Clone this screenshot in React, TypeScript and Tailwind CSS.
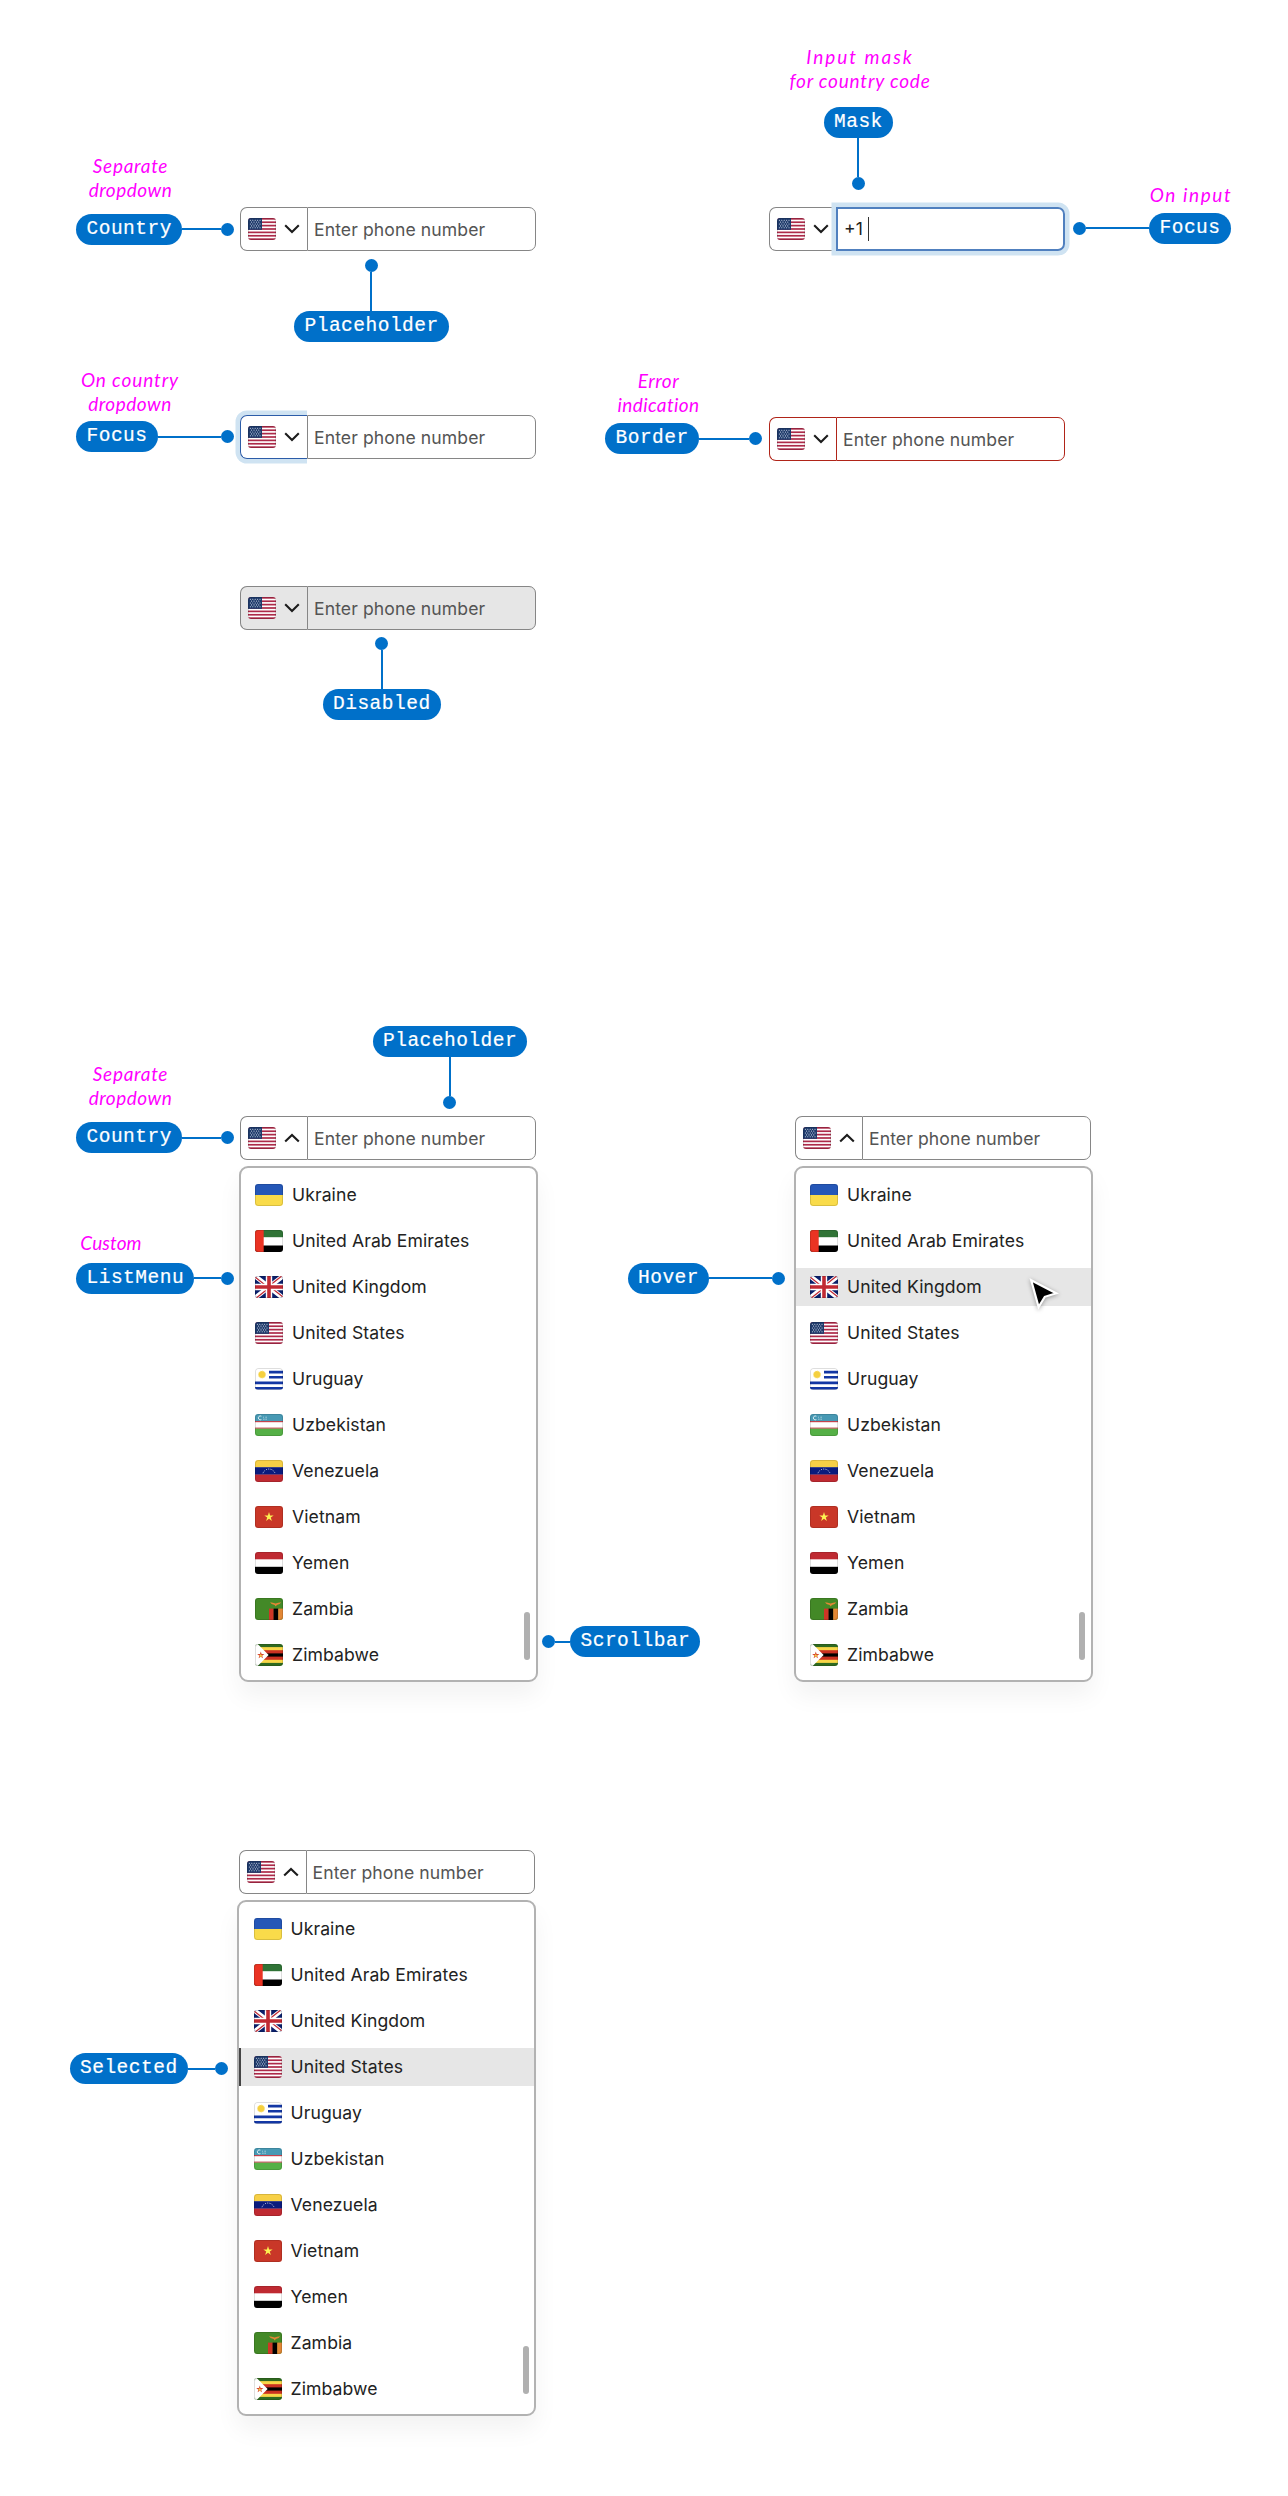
import type { ReactNode } from "react";

type Code = "ua" | "ae" | "gb" | "us" | "uy" | "uz" | "ve" | "vn" | "ye" | "zm" | "zw";

const COUNTRIES: { code: Code; name: string }[] = [
  { code: "ua", name: "Ukraine" },
  { code: "ae", name: "United Arab Emirates" },
  { code: "gb", name: "United Kingdom" },
  { code: "us", name: "United States" },
  { code: "uy", name: "Uruguay" },
  { code: "uz", name: "Uzbekistan" },
  { code: "ve", name: "Venezuela" },
  { code: "vn", name: "Vietnam" },
  { code: "ye", name: "Yemen" },
  { code: "zm", name: "Zambia" },
  { code: "zw", name: "Zimbabwe" },
];

const STAR = "M0 -1 L.225 -.309 L.951 -.309 L.363 .118 L.588 .809 L0 .382 L-.588 .809 L-.363 .118 L-.951 -.309 L-.225 -.309Z";

const ART: Record<Code, ReactNode> = {
  ua: (
    <>
      <rect width="28" height="11" fill="#2557b7" />
      <rect y="11" width="28" height="11" fill="#f9db4a" />
    </>
  ),
  ae: (
    <>
      <rect width="28" height="22" fill="#fff" />
      <rect width="28" height="7.2" fill="#307336" />
      <rect y="15.5" width="28" height="6.5" fill="#000" />
      <rect width="8.7" height="22" fill="#ea3323" />
    </>
  ),
  gb: (
    <>
      <rect width="28" height="22" fill="#0a1f6b" />
      <path d="M0 0 28 22M28 0 0 22" stroke="#fff" strokeWidth="4.6" />
      <path d="M0 1 12 10.4M28 -1 16 8.6M0 23 12 13.4M28 21 16 11.6" stroke="#c22b36" strokeWidth="1.3" />
      <path d="M14 0V22M0 11H28" stroke="#fff" strokeWidth="6.4" />
      <path d="M14 0V22M0 11H28" stroke="#c12a33" strokeWidth="3.6" />
    </>
  ),
  us: (
    <>
      <rect width="28" height="22" fill="#fff" />
      {[0, 1, 2, 3, 4, 5, 6].map((i) => (
        <rect key={i} y={i * 3.385} width="28" height="1.69" fill="#ad2a49" />
      ))}
      <rect width="14" height="11.85" fill="#1e3a6b" />
      {[2.2, 4.1, 6, 7.9, 9.8].map((y, r) =>
        (r % 2 ? [3.6, 6, 8.4, 10.8] : [2.4, 4.8, 7.2, 9.6, 12]).map((x) => (
          <circle key={`${x}-${y}`} cx={x} cy={y} r=".55" fill="#dbe2ee" />
        ))
      )}
    </>
  ),
  uy: (
    <>
      <rect width="28" height="22" fill="#fff" />
      <path d="M14 4.1H28M14 9.3H28M0 14.9H28M0 20.2H28" stroke="#1337a4" strokeWidth="2.6" />
      <circle cx="7" cy="6.6" r="3.5" fill="#f5d03e" stroke="#f9e07c" strokeWidth="1" strokeDasharray="1.1 .9" />
    </>
  ),
  uz: (
    <>
      <rect width="28" height="22" fill="#fff" />
      <rect width="28" height="7.2" fill="#4799b4" />
      <rect y="7" width="28" height="1.2" fill="#c4434d" />
      <rect y="13.6" width="28" height="1.2" fill="#c4434d" />
      <rect y="14.7" width="28" height="7.3" fill="#55b046" />
      <path d="M6.4 2.2A2 2 0 1 0 6.4 5.6" fill="none" stroke="#e6f3f6" strokeWidth=".9" />
      <path d="M8.4 5.2h1M10.6 5.2h1M10.6 3.2h1M8.4 3.2h.6" stroke="#e6f3f6" strokeWidth=".9" />
    </>
  ),
  ve: (
    <>
      <rect width="28" height="7.4" fill="#f7d046" />
      <rect y="7.2" width="28" height="7.6" fill="#0a1b7d" />
      <rect y="14.6" width="28" height="7.4" fill="#bf2a32" />
      <path d="M8 13.2A6.4 6.4 0 0 1 20 13.2" fill="none" stroke="#dfe3f3" strokeWidth="1" strokeDasharray="1 1.3" />
    </>
  ),
  vn: (
    <>
      <rect width="28" height="22" fill="#c93728" />
      <path d={STAR} transform="translate(14 11) scale(4.9)" fill="#fdf151" />
    </>
  ),
  ye: (
    <>
      <rect width="28" height="22" fill="#fff" />
      <rect width="28" height="7.3" fill="#bf2a32" />
      <rect y="14.8" width="28" height="7.2" fill="#000" />
    </>
  ),
  zm: (
    <>
      <rect width="28" height="22" fill="#438927" />
      <rect x="14" y="10.6" width="4.8" height="11.4" fill="#ce3626" />
      <rect x="18.6" y="10.6" width="4.8" height="11.4" fill="#000" />
      <rect x="23.2" y="10.6" width="4.8" height="11.4" fill="#e28735" />
      <path d="M15 4.2Q18 4.8 20.6 5.4Q23 4.8 26.2 4.2Q24.8 6.8 21.8 7.1L20.8 8.4L19.6 7.1Q16.4 6.8 15 4.2Z" fill="#e28735" />
    </>
  ),
  zw: (
    <>
      <rect width="28" height="22" fill="#2f6a20" />
      <rect y="3.1" width="28" height="15.8" fill="#f8d648" />
      <rect y="6.2" width="28" height="9.6" fill="#cb3122" />
      <rect y="9.4" width="28" height="3.2" fill="#000" />
      <path d="M0 0H2.6L13.6 11L2.6 22H0Z" fill="#fff" />
      <path d={STAR} transform="translate(5.8 11.2) scale(3.8)" fill="#d4442c" />
      <path d={STAR} transform="translate(5.8 11.6) scale(2.1)" fill="#f5cf45" />
    </>
  ),
};

function Flag({ code }: { code: Code }) {
  return (
    <svg viewBox="0 0 28 22" className="h-[22px] w-7 shrink-0 overflow-hidden rounded-[3px]">
      {ART[code]}
      <rect x=".5" y=".5" width="27" height="21" rx="2.6" fill="none" stroke="#000" strokeOpacity=".13" />
    </svg>
  );
}

function Chevron({ up = false }: { up?: boolean }) {
  return (
    <svg viewBox="0 0 16 10" className="h-2.5 w-4 shrink-0" fill="none" stroke="#1c1c1c" strokeWidth="2.1">
      <path d={up ? "M1.2 8.6 8 1.9 14.8 8.6" : "M1.2 1.3 8 8 14.8 1.3"} />
    </svg>
  );
}

type State = "default" | "open" | "focusCountry" | "focusInput" | "error" | "disabled";

const EDGE: Record<State, string> = {
  default: "border-[#868686]",
  open: "border-[#868686]",
  focusCountry: "border-[#868686]",
  focusInput: "border-[#868686]",
  error: "border-[#b02418]",
  disabled: "border-[#868686] bg-[#e6e6e6]",
};

function PhoneField({ state = "default" }: { state?: State }) {
  const edge = EDGE[state];
  return (
    <div className={`flex h-11 w-[296px] rounded-[7px] ${edge}`}>
      <div
        className={`flex w-[67px] shrink-0 items-center gap-2 rounded-l-[7px] border-y border-l pl-[7px] ${
          state === "focusCountry"
            ? "border-[#2c5ca8] shadow-[0_0_0_4.5px_#cfe3f2] [clip-path:inset(-6px_0_-6px_-6px)]"
            : edge
        }`}
      >
        <Flag code="us" />
        <Chevron up={state === "open"} />
      </div>
      {state === "focusInput" ? (
        <div className="flex flex-1 items-center rounded-r-[7px] border-2 border-[#5080bf] pl-[6px] text-[17.6px] text-[#222] shadow-[0_0_0_4.5px_#cfe3f2]">
          <span className="mt-px">+1</span>
          <span className="ml-[5px] h-6 w-px bg-[#333]" />
        </div>
      ) : (
        <div className={`flex flex-1 items-center rounded-r-[7px] border pl-[6px] text-[17.6px] tracking-[0.09px] text-[#545454] ${edge}`}>
          <span className="mt-0.5">Enter phone number</span>
        </div>
      )}
    </div>
  );
}

function ListMenu({ hover, selected }: { hover?: Code; selected?: Code }) {
  return (
    <div className="relative -mx-[1.5px] mt-1.5 flex h-[516px] flex-col gap-2 rounded-[9px] border-2 border-[#b2b2b2] bg-white pt-[7.5px] shadow-[0_14px_24px_rgba(0,0,0,0.05)]">
      {COUNTRIES.map(({ code, name }) => (
        <div
          key={code}
          className={`flex h-[38px] shrink-0 items-center gap-[9px] text-[17.6px] tracking-[0.09px] text-[#222] ${
            code === selected ? "border-l-2 border-[#444] bg-[#e6e6e6] pl-[12.5px]" : "pl-[14.5px]"
          } ${code === hover ? "bg-[#e6e6e6]" : ""}`}
        >
          <Flag code={code} />
          <span className="mt-0.5">{name}</span>
        </div>
      ))}
      <div className="absolute top-[444px] right-[5.5px] h-12 w-[6px] rounded-full bg-[#b0b0b0]" />
    </div>
  );
}

const DIRECTION = {
  right: "flex-row",
  left: "flex-row-reverse",
  down: "flex-col",
  up: "flex-col-reverse",
};

/* Pill label with a leader line ending in a dot, anchored to its specimen. */
function Callout({ text, to, lead, className }: { text: string; to: keyof typeof DIRECTION; lead: string; className: string }) {
  return (
    <div className={`absolute flex items-center ${DIRECTION[to]} ${className}`}>
      <span className="flex h-[31px] items-center rounded-full bg-[#0070c9] pt-px pr-[10px] pl-[10.5px] font-['Liberation_Mono',monospace] text-[19.5px] leading-none tracking-[0.5px] whitespace-nowrap text-white [-webkit-text-stroke:0.2px_white]">
        {text}
      </span>
      <span className={`shrink-0 bg-[#0070c9] ${lead}`} />
      <span className="size-[13px] shrink-0 rounded-full bg-[#0070c9]" />
    </div>
  );
}

function Note({ children, className }: { children: ReactNode; className: string }) {
  return (
    <div className={`absolute flex flex-col items-center font-['Lato',sans-serif] text-[19px] leading-6 whitespace-nowrap text-[#ff00ff] italic ${className}`}>
      {children}
    </div>
  );
}

export default function App() {
  return (
    <main className="h-[2496px] w-[1288px] overflow-hidden bg-white pt-[207px] font-['Inter',sans-serif]">
      <section className="flex gap-[233px] pl-60">
        <div className="relative">
          <PhoneField />
          <Note className="top-[-53px] left-[-152px] w-[85px]">
            <span className="tracking-[0.7px]">Separate</span>
            <span className="tracking-[0.5px]">dropdown</span>
          </Note>
          <Callout text="Country" to="right" lead="h-[2px] w-[39px]" className="top-[6.5px] left-[-164px]" />
          <Callout text="Placeholder" to="up" lead="h-[39px] w-[2px]" className="top-[52px] left-[54px]" />
        </div>
        <div className="relative">
          <PhoneField state="focusInput" />
          <Note className="top-[-162px] left-[19px] w-36">
            <span className="tracking-[2px]">Input mask</span>
            <span className="tracking-[0.8px]">for country code</span>
          </Note>
          <Callout text="Mask" to="down" lead="h-[39px] w-[2px]" className="top-[-100px] left-[54.5px]" />
          <Note className="top-[-24px] left-[381px] w-[82px]">
            <span className="tracking-[1.6px]">On input</span>
          </Note>
          <Callout text="Focus" to="left" lead="h-[2px] w-[63px]" className="top-[5.5px] left-[304px]" />
        </div>
      </section>

      <section className="mt-[164px] flex items-start gap-[233px] pl-60">
        <div className="relative">
          <PhoneField state="focusCountry" />
          <Note className="top-[-47px] left-[-160px] w-[100px]">
            <span className="tracking-[0.9px]">On country</span>
            <span className="tracking-[0.5px]">dropdown</span>
          </Note>
          <Callout text="Focus" to="right" lead="h-[2px] w-[63px]" className="top-[6px] left-[-164px]" />
        </div>
        <div className="relative mt-[2px]">
          <PhoneField state="error" />
          <Note className="top-[-48px] left-[-152px] w-[83px]">
            <span className="tracking-[0.5px]">Error</span>
            <span className="tracking-[0.4px]">indication</span>
          </Note>
          <Callout text="Border" to="right" lead="h-[2px] w-[50px]" className="top-[6px] left-[-164px]" />
        </div>
      </section>

      <section className="mt-[125px] flex pl-60">
        <div className="relative">
          <PhoneField state="disabled" />
          <Callout text="Disabled" to="up" lead="h-[39px] w-[2px]" className="top-[50.5px] left-[82.5px]" />
        </div>
      </section>

      <section className="mt-[486px] flex gap-[259px] pl-60">
        <div className="relative">
          <PhoneField state="open" />
          <ListMenu />
          <Note className="top-[-54px] left-[-152px] w-[85px]">
            <span className="tracking-[0.7px]">Separate</span>
            <span className="tracking-[0.5px]">dropdown</span>
          </Note>
          <Callout text="Country" to="right" lead="h-[2px] w-[39px]" className="top-[6px] left-[-164px]" />
          <Callout text="Placeholder" to="down" lead="h-[39px] w-[2px]" className="top-[-90.5px] left-[132.5px]" />
          <Note className="top-[115px] left-[-160px] w-[62px]">
            <span className="tracking-[0.1px]">Custom</span>
          </Note>
          <Callout text="ListMenu" to="right" lead="h-[2px] w-[27px]" className="top-[146.5px] left-[-164px]" />
          <Callout text="Scrollbar" to="left" lead="h-[2px] w-[15px]" className="top-[510px] left-[302px]" />
        </div>
        <div className="relative">
          <PhoneField state="open" />
          <ListMenu hover="gb" />
          <Callout text="Hover" to="right" lead="h-[2px] w-[63px]" className="top-[146.5px] left-[-167.5px]" />
          <svg viewBox="0 0 34 40" className="absolute top-[159px] left-[232px] h-10 w-[34px] drop-shadow-[0_1px_2px_rgba(0,0,0,0.35)]">
            <path d="M4.2 5.2 29.2 18.2 17.8 21.8 11.6 32Z" fill="#000" stroke="#fff" strokeWidth="2.2" />
          </svg>
        </div>
      </section>

      <section className="mt-[168px] flex pl-[238.5px]">
        <div className="relative">
          <PhoneField state="open" />
          <ListMenu selected="us" />
          <Callout text="Selected" to="right" lead="h-[2px] w-[27px]" className="top-[203px] left-[-169px]" />
        </div>
      </section>
    </main>
  );
}
